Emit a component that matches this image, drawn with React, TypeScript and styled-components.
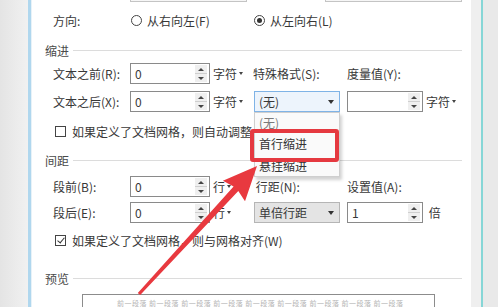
import React from "react";
import styled, { createGlobalStyle, css } from "styled-components";

const GlobalStyle = createGlobalStyle`
  html, body { margin: 0; padding: 0; width: 498px; height: 307px; overflow: hidden; background: #fff; }
  body {
    font-family: "Noto Sans CJK SC", "Microsoft YaHei", sans-serif;
    font-size: 12px;
    color: #383838;
  }
`;

const Page = styled.div`
  position: relative;
  display: flex;
  width: 498px;
  height: 307px;
  overflow: hidden;
`;

const LeftStrip = styled.div`
  width: 28px;
  flex: none;
  background: linear-gradient(to right, #e4e4e4, #f1f1f1);
`;

const BlueEdge = styled.div`
  width: 4px;
  flex: none;
  background: linear-gradient(to right, #b0d7ee 0 3px, #e8f2f8 3px 4px);
`;

const Dialog = styled.div`
  width: 439px;
  flex: none;
  background: #fff;
  display: flex;
  flex-direction: column;
  padding: 0 9px 0 13px;
  box-sizing: border-box;
  overflow: hidden;
`;

const RightStrip = styled.div`
  flex: 1;
  background: linear-gradient(
    to right,
    #efefef 0 10px,
    #86d6d6 10px 12px,
    #e9e9e9 12px
  );
`;

const TopRow = styled.div`
  display: flex;
  height: 20px;
  margin-top: -18px;
  flex: none;
`;

const GhostBox = styled.div<{ $left: number; $width: number }>`
  margin-left: ${(p) => p.$left}px;
  width: ${(p) => p.$width}px;
  height: 20px;
  box-sizing: border-box;
  border: 1px solid #c4c4c4;
  background: #f6f6f6;
`;

const DirRow = styled.div`
  display: grid;
  grid-template-columns: 77px 123px auto;
  align-items: center;
  height: 20px;
  margin: 8px 0 0 8px;
  flex: none;
`;

const RadioLabel = styled.label`
  display: flex;
  align-items: center;
  gap: 5px;
  white-space: nowrap;
`;

const RadioDot = styled.span<{ $on?: boolean }>`
  width: 11px;
  height: 11px;
  border: 1px solid #444;
  border-radius: 50%;
  box-sizing: border-box;
  margin-left: 1px;
  position: relative;
  ${(p) =>
    p.$on &&
    css`
      &::after {
        content: "";
        position: absolute;
        left: 2px;
        top: 2px;
        width: 5px;
        height: 5px;
        border-radius: 50%;
        background: #333;
      }
    `}
`;

const Section = styled.div<{ $mt: number }>`
  display: flex;
  align-items: center;
  height: 16px;
  margin-top: ${(p) => p.$mt}px;
  color: #4a4a4a;
  flex: none;
  &::after {
    content: "";
    flex: 1;
    height: 1px;
    background: #dcdcdc;
    margin-left: 4px;
  }
`;

const Row = styled.div<{ $mt: number }>`
  display: grid;
  grid-template-columns: 77px 80px 43px 87px 7px 76px auto;
  align-items: center;
  height: 21px;
  margin: ${(p) => p.$mt}px 0 0 8px;
  flex: none;
`;

const Label = styled.span`
  white-space: nowrap;
`;

const SpinBox = styled.div`
  height: 21px;
  box-sizing: border-box;
  border: 1px solid #8a8a8a;
  background: #fff;
  display: flex;
  align-items: center;
  padding-left: 4px;
`;

const SpinValue = styled.span`
  flex: 1;
`;

const Spinner = styled.div`
  width: 12px;
  height: 17px;
  margin-right: 2px;
  background: #efefef;
  display: flex;
  flex-direction: column;
`;

const SpinHalf = styled.div<{ $up?: boolean }>`
  flex: 1;
  display: flex;
  align-items: center;
  justify-content: center;
  ${(p) => p.$up && css`border-bottom: 1px solid #cfcfcf;`}
  &::after {
    content: "";
    border-left: 3px solid transparent;
    border-right: 3px solid transparent;
    ${(p) =>
      p.$up
        ? css`border-bottom: 3px solid #444;`
        : css`border-top: 3px solid #444;`}
  }
`;

const Unit = styled.span`
  display: flex;
  align-items: center;
  padding-left: 3px;
  white-space: nowrap;
`;

const Caret = styled.span`
  display: inline-block;
  margin-left: 2px;
  border-left: 2.5px solid transparent;
  border-right: 2.5px solid transparent;
  border-top: 3px solid #444;
`;

const ComboCell = styled.div`
  position: relative;
  height: 100%;
  display: flex;
  align-items: center;
`;

const Combo = styled.div<{ $focus?: boolean }>`
  width: 86px;
  margin-left: 1px;
  height: 21px;
  box-sizing: border-box;
  display: flex;
  align-items: center;
  justify-content: space-between;
  padding: 0 5px 0 4px;
  border: 1px solid ${(p) => (p.$focus ? "#7fb3e6" : "#b5b5b5")};
  background: ${(p) => (p.$focus ? "#edf4fc" : "#e4e4e4")};
  &::after {
    content: "";
    border-left: 3.5px solid transparent;
    border-right: 3.5px solid transparent;
    border-top: 4px solid #333;
  }
`;

const DropList = styled.div`
  position: absolute;
  top: 100%;
  left: 1px;
  width: 86px;
  height: 65px;
  box-sizing: border-box;
  border: 1px solid #cfcfcf;
  background: #fafafa;
  box-shadow: 2px 3px 3px rgba(0, 0, 0, 0.18);
  z-index: 2;
  display: flex;
  flex-direction: column;
`;

const DropItem = styled.div<{ $dim?: boolean; $h: number }>`
  height: ${(p) => p.$h}px;
  line-height: ${(p) => p.$h}px;
  padding-left: 4px;
  color: ${(p) => (p.$dim ? "#7a7a7a" : "#333")};
  flex: none;
  overflow: hidden;
`;

const Highlight = styled.div`
  position: absolute;
  left: -5px;
  top: 16px;
  width: 89px;
  height: 33px;
  box-sizing: border-box;
  border: 4px solid #e53940;
  border-radius: 3px;
`;

const CheckRow = styled.label<{ $mt: number }>`
  display: flex;
  align-items: center;
  gap: 6px;
  height: 18px;
  margin: ${(p) => p.$mt}px 0 0 10px;
  white-space: nowrap;
  flex: none;
`;

const CheckBox = styled.span<{ $on?: boolean }>`
  width: 11px;
  height: 11px;
  flex: none;
  border: 1px solid #444;
  box-sizing: border-box;
  position: relative;
  ${(p) =>
    p.$on &&
    css`
      &::after {
        content: "";
        position: absolute;
        left: 3px;
        top: 0px;
        width: 3px;
        height: 6px;
        border-right: 1px solid #333;
        border-bottom: 1px solid #333;
        transform: rotate(40deg);
      }
    `}
`;

const Preview = styled.div`
  margin: 8px 0 0 37px;
  width: 353px;
  height: 40px;
  box-sizing: border-box;
  border: 1px solid #8c8c8c;
  flex: none;
  padding: 3px 0 0 34px;
  font-size: 7px;
  color: #b4b4b4;
  white-space: nowrap;
  overflow: hidden;
  letter-spacing: 0.5px;
`;

const ArrowLayer = styled.svg`
  position: absolute;
  left: 0;
  top: 0;
  pointer-events: none;
  z-index: 5;
`;

function Spin({ value }: { value: string }) {
  return (
    <SpinBox>
      <SpinValue>{value}</SpinValue>
      <Spinner>
        <SpinHalf $up />
        <SpinHalf />
      </Spinner>
    </SpinBox>
  );
}

function RedArrow() {
  const tip = [257, 166];
  const tail = [139, 294];
  const dx = tip[0] - tail[0];
  const dy = tip[1] - tail[1];
  const len = Math.hypot(dx, dy);
  const ux = dx / len;
  const uy = dy / len;
  const nx = -uy;
  const ny = ux;
  const headLen = 34;
  const headHalf = 15;
  const bx = tip[0] - ux * headLen;
  const by = tip[1] - uy * headLen;
  const pts = [
    [tip[0], tip[1]],
    [bx + nx * headHalf, by + ny * headHalf],
    [bx + nx * 3.2 + ux * 3, by + ny * 3.2 + uy * 3],
    [tail[0] + nx * 1.6, tail[1] + ny * 1.6],
    [tail[0] - nx * 1.6, tail[1] - ny * 1.6],
    [bx - nx * 3.2 + ux * 3, by - ny * 3.2 + uy * 3],
    [bx - nx * headHalf, by - ny * headHalf],
  ]
    .map((p) => `${p[0].toFixed(1)},${p[1].toFixed(1)}`)
    .join(" ");
  return (
    <ArrowLayer width="498" height="307" viewBox="0 0 498 307">
      <polygon points={pts} fill="#e8393f" />
    </ArrowLayer>
  );
}

export default function App() {
  return (
    <>
      <GlobalStyle />
      <Page>
        <LeftStrip />
        <BlueEdge />
        <Dialog>
          <TopRow>
            <GhostBox $left={85} $width={117} />
            <GhostBox $left={78} $width={137} />
          </TopRow>

          <DirRow>
            <Label>方向:</Label>
            <RadioLabel>
              <RadioDot />
              从右向左(F)
            </RadioLabel>
            <RadioLabel>
              <RadioDot $on />
              从左向右(L)
            </RadioLabel>
          </DirRow>

          <Section $mt={12}>缩进</Section>

          <Row $mt={5}>
            <Label>文本之前(R):</Label>
            <Spin value="0" />
            <Unit>
              字符<Caret />
            </Unit>
            <Label>特殊格式(S):</Label>
            <span />
            <Label>度量值(Y):</Label>
          </Row>

          <Row $mt={7}>
            <Label>文本之后(X):</Label>
            <Spin value="0" />
            <Unit>
              字符<Caret />
            </Unit>
            <ComboCell>
              <Combo $focus>(无)</Combo>
              <DropList>
                <DropItem $dim $h={20}>(无)</DropItem>
                <DropItem $h={22}>首行缩进</DropItem>
                <DropItem $h={21}>悬挂缩进</DropItem>
                <Highlight />
              </DropList>
            </ComboCell>
            <span />
            <Spin value="" />
            <Unit>
              字符<Caret />
            </Unit>
          </Row>

          <CheckRow $mt={10}>
            <CheckBox />
            <span>如果定义了文档网格，则自动调整</span>
          </CheckRow>

          <Section $mt={12}>间距</Section>

          <Row $mt={8}>
            <Label>段前(B):</Label>
            <Spin value="0" />
            <Unit>
              行<Caret />
            </Unit>
            <Label>&nbsp;行距(N):</Label>
            <span />
            <Label>设置值(A):</Label>
          </Row>

          <Row $mt={5}>
            <Label>段后(E):</Label>
            <Spin value="0" />
            <Unit>
              行<Caret />
            </Unit>
            <ComboCell>
              <Combo>单倍行距</Combo>
            </ComboCell>
            <span />
            <Spin value="1" />
            <Unit>&nbsp;倍</Unit>
          </Row>

          <CheckRow $mt={8}>
            <CheckBox $on />
            <span>如果定义了文档网格，则与网格对齐(W)</span>
          </CheckRow>

          <Section $mt={21}>预览</Section>

          <Preview>
            前一段落 前一段落 前一段落 前一段落 前一段落 前一段落 前一段落 前一段落 前一段落
          </Preview>
        </Dialog>
        <RightStrip />
        <RedArrow />
      </Page>
    </>
  );
}
